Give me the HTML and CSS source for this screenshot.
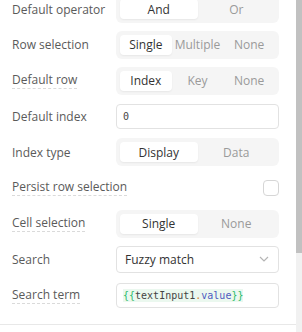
FILE: index.html
```html
<!DOCTYPE html>
<html lang="en">
<head>
    <meta charset="UTF-8" />
    <title>Table settings</title>
    <link rel="stylesheet" href="styles.css">
</head>
<body>
<div class="frame">
    <div class="panel">
        <div class="rows">
            <div class="row">
                <span class="label">Default operator</span>
                <div class="segmented">
                    <span class="seg active">And</span>
                    <span class="seg">Or</span>
                </div>
            </div>
            <div class="row">
                <span class="label">Row selection</span>
                <div class="segmented three">
                    <span class="seg active">Single</span>
                    <span class="seg">Multiple</span>
                    <span class="seg">None</span>
                </div>
            </div>
            <div class="row">
                <span class="label hint">Default row</span>
                <div class="segmented three">
                    <span class="seg active">Index</span>
                    <span class="seg">Key</span>
                    <span class="seg">None</span>
                </div>
            </div>
            <div class="row">
                <span class="label">Default index</span>
                <div class="input mono">0</div>
            </div>
            <div class="row">
                <span class="label">Index type</span>
                <div class="segmented">
                    <span class="seg active">Display</span>
                    <span class="seg">Data</span>
                </div>
            </div>
            <div class="row">
                <span class="label hint">Persist row selection</span>
                <div class="check-cell"><span class="checkbox"></span></div>
            </div>
            <div class="row">
                <span class="label hint">Cell selection</span>
                <div class="segmented">
                    <span class="seg active">Single</span>
                    <span class="seg">None</span>
                </div>
            </div>
            <div class="row">
                <span class="label">Search</span>
                <div class="select">
                    <span>Fuzzy match</span>
                    <svg width="10" height="6" viewBox="0 0 10 6"><path d="M1 1l4 4 4-4" fill="none" stroke="#b5b5b5" stroke-width="1.2"/></svg>
                </div>
            </div>
            <div class="row">
                <span class="label hint">Search term</span>
                <div class="input mono"><span class="code"><span class="brace">{{</span>textInput1<span class="dot">.</span><span class="prop">value</span><span class="brace">}}</span></span></div>
            </div>
        </div>
        <div class="divider"></div>
    </div>
    <div class="scrollbar"><div class="thumb"></div></div>
</div>
</body>
</html>
```

FILE: styles.css
```css
* {
    margin: 0;
    padding: 0;
    box-sizing: border-box;
}

body {
    font-family: "Open Sans", "Noto Sans", sans-serif;
    font-size: 12px;
    color: #3a3a3a;
    background-color: white;
    overflow: hidden;
}

.frame {
    display: flex;
    height: 332px;
}

.panel {
    flex: 1;
    padding: 0 17px 0 12px;
}

.rows {
    margin-top: -5px;
    display: flex;
    flex-direction: column;
    gap: 7.75px;
}

.row {
    display: grid;
    grid-template-columns: 104px 1fr;
    align-items: center;
    height: 28px;
}

.label {
    color: #5a5a5a;
    justify-self: start;
    white-space: nowrap;
}

.label.hint {
    border-bottom: 1px dashed #dadada;
    line-height: 16px;
}

.segmented {
    display: grid;
    grid-template-columns: 1fr 1fr;
    background-color: #f5f5f5;
    border-radius: 6px;
    padding: 4px;
    height: 28px;
}

.segmented.three {
    grid-template-columns: 1fr 1fr 1fr;
}

.seg {
    display: flex;
    align-items: center;
    justify-content: center;
    color: #9a9a9a;
    border-radius: 4px;
}

.seg.active {
    background-color: white;
    color: #333;
    box-shadow: 0 1px 2px rgba(0, 0, 0, 0.06);
}

.input {
    height: 25px;
    border: 1px solid #e2e2e2;
    border-radius: 4px;
    display: flex;
    align-items: center;
    padding: 0 6px;
}

.mono {
    font-family: "DejaVu Sans Mono", monospace;
    font-size: 10px;
    color: #444;
}

.code {
    background-color: #ebf8ef;
    padding: 1px 0;
}

.brace {
    color: #2dbb6c;
}

.dot {
    color: #d5822f;
}

.prop {
    color: #4e5bc0;
}

.check-cell {
    display: flex;
    justify-content: flex-end;
}

.checkbox {
    width: 16px;
    height: 16px;
    border: 1px solid #d6d6d6;
    border-radius: 4px;
}

.select {
    height: 27px;
    border: 1px solid #e2e2e2;
    border-radius: 4px;
    display: flex;
    align-items: center;
    justify-content: space-between;
    padding: 0 9px 0 8px;
    color: #333;
}

.divider {
    margin-top: 15px;
    border-top: 1px solid #e8e8e8;
    margin-right: -17px;
    margin-left: -12px;
}

.scrollbar {
    width: 6px;
    background-color: #f1f1f1;
}

.thumb {
    height: 253px;
    background-color: #c1c1c1;
}
```
